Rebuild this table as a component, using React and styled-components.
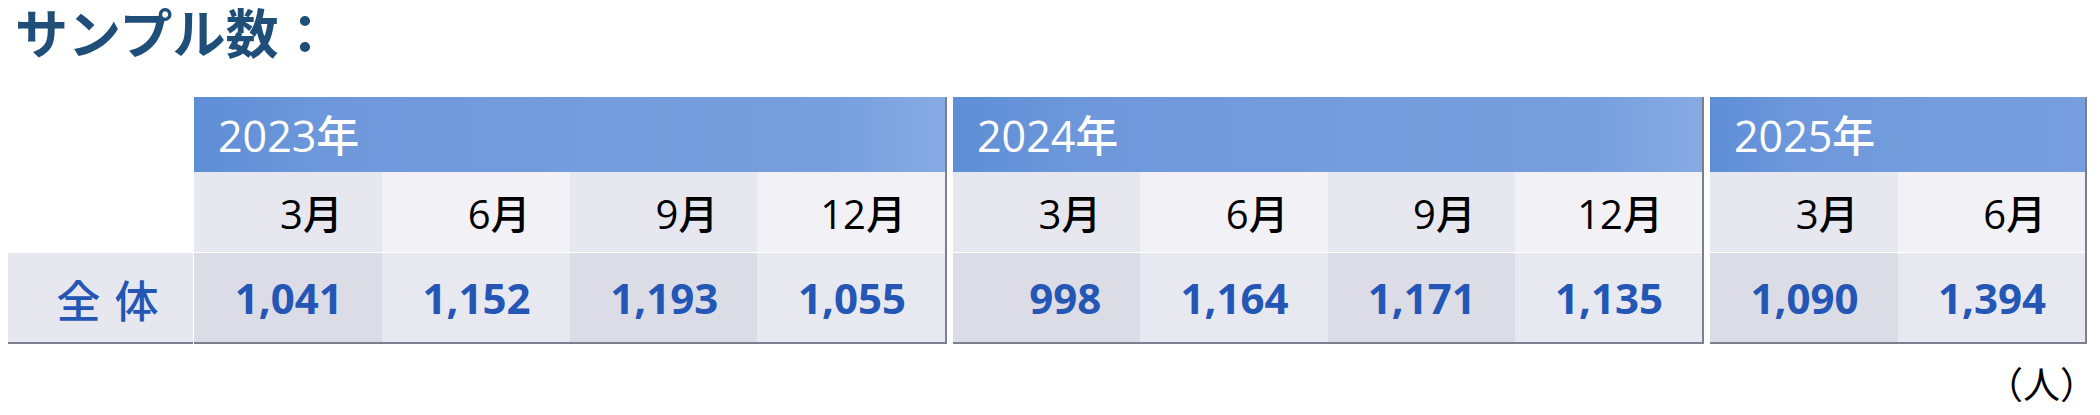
import React from "react";
import styled, { createGlobalStyle } from "styled-components";

const GlobalStyle = createGlobalStyle`
  html, body {
    margin: 0;
    padding: 0;
    background: #ffffff;
  }
  body {
    font-family: "Open Sans", "Noto Sans CJK JP", sans-serif;
  }
`;

const Page = styled.div`
  width: 2100px;
  height: 415px;
  box-sizing: border-box;
  padding: 0 3px 0 8px;
  display: flex;
  flex-direction: column;
`;

const Title = styled.h1`
  margin: 0 0 36px 7px;
  padding-top: 1px;
  font-family: "Noto Sans CJK JP", sans-serif;
  font-weight: 700;
  font-size: 53px;
  line-height: 60px;
  color: #1f4e79;
`;

const Table = styled.div`
  display: flex;
  align-items: flex-start;
`;

const LabelColumn = styled.div`
  width: 185px;
  margin-right: 1px;
  display: flex;
  flex-direction: column;
`;

const Spacer = styled.div`
  height: 156px;
  background: #ffffff;
`;

const LabelCell = styled.div`
  height: 89px;
  background: #e7e7ef;
  box-shadow: 0 2px 0 #7b7f8e;
  display: flex;
  align-items: center;
  justify-content: center;
  padding-left: 16px;
  padding-top: 2px;
  box-sizing: border-box;
  font-family: "Noto Sans CJK JP", sans-serif;
  font-weight: 500;
  font-size: 44px;
  line-height: 1;
  letter-spacing: 2px;
  color: #2356b5;
`;

const Groups = styled.div`
  display: flex;
  gap: 8px;
`;

const Group = styled.div`
  width: ${(p) => p.$width}px;
  background: #ffffff;
  box-shadow: 2px 0 0 #7b7f8e, 0 2px 0 #7b7f8e, 2px 2px 0 #7b7f8e;
  display: flex;
  flex-direction: column;
`;

const YearHeader = styled.div`
  height: 75px;
  box-sizing: border-box;
  padding: 2px 0 0 24px;
  display: flex;
  align-items: center;
  background: ${(p) =>
    p.$fade
      ? "linear-gradient(90deg, #5e8ed6 0%, #6e98db 18%, #749ddd 55%, #779fde 85%, #87aae3 100%)"
      : "linear-gradient(90deg, #5e8ed6 0%, #6e98db 25%, #749ddd 60%, #779ede 100%)"};
  color: #ffffff;
  font-size: 43px;
  font-weight: 500;
  line-height: 1;
`;

const Row = styled.div`
  display: grid;
  grid-template-columns: repeat(${(p) => p.$cols}, 1fr);
  height: ${(p) => p.$height}px;
  margin-top: ${(p) => p.$gap || 0}px;
`;

const MonthCell = styled.div`
  background: ${(p) => (p.$alt ? "#f2f2f6" : "#e7e7ef")};
  display: flex;
  align-items: center;
  justify-content: flex-end;
  box-sizing: border-box;
  padding: 3px 39px 0 0;
  color: #000000;
  font-size: 40px;
  font-weight: 500;
  line-height: 1;
`;

const ValueCell = styled.div`
  background: ${(p) => (p.$alt ? "#e8e8f0" : "#dcdce6")};
  display: flex;
  align-items: center;
  justify-content: flex-end;
  box-sizing: border-box;
  padding: 1px 39px 0 0;
  color: #2356b5;
  font-weight: 700;
  font-size: 42px;
  line-height: 1;
`;

const Note = styled.div`
  margin-top: 23px;
  align-self: flex-end;
  font-family: "Noto Sans CJK JP", sans-serif;
  font-size: 37px;
  line-height: 1;
  color: #000000;
`;

const data = [
  {
    year: "2023年",
    width: 751,
    fade: true,
    months: ["3月", "6月", "9月", "12月"],
    values: ["1,041", "1,152", "1,193", "1,055"],
  },
  {
    year: "2024年",
    width: 749,
    fade: true,
    months: ["3月", "6月", "9月", "12月"],
    values: ["998", "1,164", "1,171", "1,135"],
  },
  {
    year: "2025年",
    width: 375,
    fade: false,
    months: ["3月", "6月"],
    values: ["1,090", "1,394"],
  },
];

export default function App() {
  return (
    <>
      <GlobalStyle />
      <Page>
        <Title>サンプル数：</Title>
        <Table>
          <LabelColumn>
            <Spacer />
            <LabelCell>全 体</LabelCell>
          </LabelColumn>
          <Groups>
            {data.map((g) => (
              <Group key={g.year} $width={g.width}>
                <YearHeader $fade={g.fade}>{g.year}</YearHeader>
                <Row $cols={g.months.length} $height={80}>
                  {g.months.map((m, i) => (
                    <MonthCell key={m} $alt={i % 2 === 1}>
                      {m}
                    </MonthCell>
                  ))}
                </Row>
                <Row $cols={g.values.length} $height={89} $gap={1}>
                  {g.values.map((v, i) => (
                    <ValueCell key={i} $alt={i % 2 === 1}>
                      {v}
                    </ValueCell>
                  ))}
                </Row>
              </Group>
            ))}
          </Groups>
        </Table>
        <Note>（人）</Note>
      </Page>
    </>
  );
}
